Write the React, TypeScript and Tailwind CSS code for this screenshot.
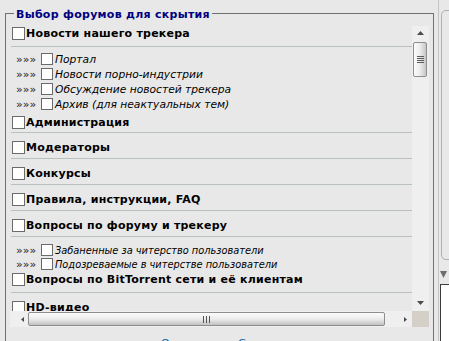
import React from "react";

const Box = ({ size }: { size: "lg" | "sm" }) => (
  <input
    type="checkbox"
    readOnly
    className={
      size === "lg"
        ? "appearance-none block shrink-0 w-[13px] h-[13px] m-0 bg-white border border-[#6b6b6b]"
        : "appearance-none block shrink-0 w-[12px] h-[12px] m-0 bg-white border border-[#6b6b6b]"
    }
  />
);

const Cat = ({ label, cls }: { label: string; cls: string }) => (
  <div className={"ml-[1px] border-b border-[#b8c0c0] " + cls}>
    <div className="flex items-start pl-[1px] h-[13px]">
      <Box size="lg" />
      <span className="ml-[1px] text-[11px] leading-[13px] font-bold tracking-[0.23px] text-black whitespace-nowrap">{label}</span>
    </div>
  </div>
);

const Sub = ({ label, h, txt }: { label: string; h: string; txt: string }) => (
  <div className={"flex items-start pl-[6px] " + h}>
    <span className="w-[25px] text-[11px] leading-[12px] pt-[1px] text-[#222]">»»»</span>
    <Box size="sm" />
    <span className={"ml-[2px] pt-[1px] leading-[12px] italic text-black whitespace-nowrap " + txt}>{label}</span>
  </div>
);

const VScroll = () => (
  <div className="w-[17px] h-full bg-[#efefef] flex flex-col">
    <div className="h-[14px] flex items-center justify-center">
      <svg width="7" height="4" viewBox="0 0 7 4">
        <polygon points="0,4 3.5,0 7,4" fill="#4a4a4a" />
      </svg>
    </div>
    <div className="mt-[2px] ml-[1px] w-[14px] h-[35px] rounded-[2px] border border-[#8e8e8e] bg-gradient-to-r from-[#fbfbfb] via-[#ececec] to-[#c6c6c6] flex flex-col items-center justify-center gap-[1px]">
      <div className="w-[7px] h-[1px] bg-[#5a5a5a]" />
      <div className="w-[7px] h-[1px] bg-[#5a5a5a]" />
      <div className="w-[7px] h-[1px] bg-[#5a5a5a]" />
      <div className="w-[7px] h-[1px] bg-[#5a5a5a]" />
    </div>
    <div className="flex-1" />
    <div className="h-[16px] flex items-center justify-center">
      <svg width="7" height="4" viewBox="0 0 7 4">
        <polygon points="0,0 7,0 3.5,4" fill="#4a4a4a" />
      </svg>
    </div>
  </div>
);

const HScroll = () => (
  <div className="w-[402px] h-full bg-[#efefef] flex items-center">
    <div className="w-[18px] h-full flex items-center pl-[11px]">
      <svg width="3" height="5" viewBox="0 0 3 5">
        <polygon points="3,0 3,5 0,2.5" fill="#4a4a4a" />
      </svg>
    </div>
    <div className="w-[357px] h-[14px] rounded-[2px] border border-[#8e8e8e] bg-gradient-to-b from-[#fbfbfb] via-[#ececec] to-[#c2c2c2] flex items-center justify-center gap-[2px]">
      <div className="w-[1px] h-[7px] bg-[#555]" />
      <div className="w-[1px] h-[7px] bg-[#555]" />
      <div className="w-[1px] h-[7px] bg-[#555]" />
    </div>
    <div className="flex-1 h-full flex items-center justify-end pr-[5px]">
      <svg width="3" height="5" viewBox="0 0 3 5">
        <polygon points="0,0 3,2.5 0,5" fill="#4a4a4a" />
      </svg>
    </div>
  </div>
);

export default function App() {
  return (
    <div className="w-[449px] h-[341px] overflow-hidden bg-[#e8e8e8] flex font-['DejaVu_Sans',Verdana,sans-serif]">
      <div className="w-[439px] shrink-0 border-r border-[#c4c4c4] flex flex-col">
        <div className="mt-[1px] h-[1px] bg-white" />
        <fieldset className="mt-[3px] ml-[5px] w-[429px] min-h-[400px] border border-[#707070] pl-[4px] pr-[4px] pt-[4px]">
          <legend className="ml-[4px] px-[2px] pt-[4px] text-[11px] leading-[14px] font-bold tracking-[0.28px] text-[#000080]">
            Выбор форумов для скрытия
          </legend>
          <div className="flex flex-col">
            <div className="flex h-[285px]">
              <div className="w-[402px] overflow-hidden">
                <div className="pt-[1px] w-[430px]">
                  <Cat label="Новости нашего трекера" cls="pb-[6px]" />
                  <div className="pt-[6px] pb-[3px]">
                    <Sub label="Портал" h="h-[15px]" txt="text-[10.7px]" />
                    <Sub label="Новости порно-индустрии" h="h-[15px]" txt="text-[10.7px]" />
                    <Sub label="Обсуждение новостей трекера" h="h-[15px]" txt="text-[10.7px]" />
                    <Sub label="Архив (для неактуальных тем)" h="h-[15px]" txt="text-[10.7px]" />
                  </div>
                  <Cat label="Администрация" cls="pb-[3px]" />
                  <Cat label="Модераторы" cls="pt-[8px] pb-[4px]" />
                  <Cat label="Конкурсы" cls="pt-[8px] pb-[4px]" />
                  <Cat label="Правила, инструкции, FAQ" cls="pt-[8px] pb-[4px]" />
                  <Cat label="Вопросы по форуму и трекеру" cls="pt-[8px] pb-[4px]" />
                  <div className="pt-[7px] pb-[1px]">
                    <Sub label="Забаненные за читерство пользователи" h="h-[14px]" txt="text-[9.8px]" />
                    <Sub label="Подозреваемые в читерстве пользователи" h="h-[14px]" txt="text-[9.8px]" />
                  </div>
                  <Cat label="Вопросы по BitTorrent сети и её клиентам" cls="pb-[6px]" />
                  <Cat label="HD-видео" cls="pt-[8px] pb-[4px]" />
                  <Cat label="Зарубежное кино" cls="pt-[8px] pb-[4px]" />
                </div>
              </div>
              <VScroll />
            </div>
            <div className="flex h-[16px]">
              <HScroll />
              <div className="w-[17px] h-full bg-[#d4d0c8]" />
            </div>
          </div>
          <div className="mt-[10px] flex pl-[151px] text-[11px] leading-[14px] text-[#0060a8]">
            <span className="w-[77px] whitespace-nowrap">Отметить все</span>
            <span className="whitespace-nowrap">Снять отметки</span>
          </div>
        </fieldset>
      </div>
      <div className="flex-1 overflow-hidden flex flex-col">
        <div className="mt-[10px] ml-[2px] h-[250px] w-[30px] shrink-0 rounded-[5px] border border-[#a9b1b6]" />
        <svg className="mt-[11px] ml-[1px] shrink-0" width="7" height="7" viewBox="0 0 7 7">
          <polygon points="0,0 7,0 3.5,7" fill="#6e6e6e" />
        </svg>
        <div className="mt-[6px] ml-[1px] flex-1 w-[30px] bg-white border-l border-t border-[#3c3c3c]" />
      </div>
    </div>
  );
}
